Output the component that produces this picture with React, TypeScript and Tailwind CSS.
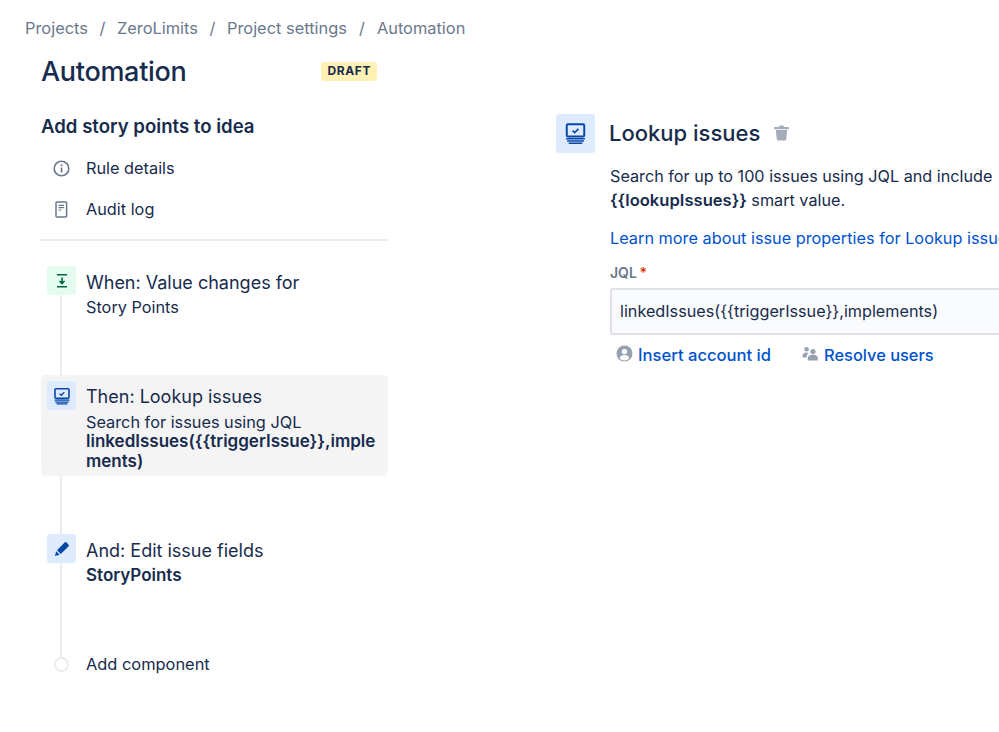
import React from "react";

const LookupIcon = ({ size }: { size: number }) => (
  <svg width={size} height={size} viewBox="0 0 24 24" fill="none">
    <rect x="3.6" y="3.2" width="16.8" height="11.6" rx="1.2" stroke="#0747A6" strokeWidth="1.9" />
    <path d="M9.2 9.2l2 2 3.6-3.6" stroke="#0747A6" strokeWidth="1.6" />
    <path d="M3 17h18M4 19.2h16M5.500 21.300h13" stroke="#0747A6" strokeWidth="1.5" />
  </svg>
);

export default function App() {
  return (
    <div className="relative w-[999px] h-[732px] overflow-hidden bg-white text-[#172B4D] font-['Inter','Noto_Sans',sans-serif]">
      <nav className="flex items-center pl-[25px] pt-[17px] h-[39px] text-[16.4px] leading-[20px] text-[#6B778C] whitespace-nowrap">
        <span>Projects</span>
        <span className="w-[29px] text-center">/</span>
        <span>ZeroLimits</span>
        <span className="w-[29px] text-center">/</span>
        <span>Project settings</span>
        <span className="w-[30px] text-center">/</span>
        <span>Automation</span>
      </nav>

      <div className="flex">
        <aside className="ml-[41px] w-[347px] shrink-0">
          <div className="flex items-center justify-between pr-[11px] h-[40px] mt-[13px]">
            <h1 className="text-[27px] leading-[40px] font-medium tracking-[-0.3px]">Automation</h1>
            <span className="rounded-[3px] bg-[#FFF0B3] px-[6px] h-[19px] mt-[-2px] flex items-center text-[12px] font-bold tracking-[0.6px]">DRAFT</span>
          </div>
          <h2 className="mt-[22px] text-[18.6px] leading-[24px] font-semibold">Add story points to idea</h2>

          <div className="mt-[18px] flex items-center h-[24px]">
            <span className="w-[45px] pl-[11px] flex">
              <svg width="19" height="19" viewBox="0 0 19 19" fill="none">
                <circle cx="9.5" cy="9.5" r="7.3" stroke="#6B778C" strokeWidth="1.6" />
                <rect x="8.7" y="8.5" width="1.7" height="5" fill="#6B778C" />
                <circle cx="9.5" cy="6.2" r="1" fill="#6B778C" />
              </svg>
            </span>
            <span className="text-[16.3px]">Rule details</span>
          </div>
          <div className="mt-[17px] flex items-center h-[24px]">
            <span className="w-[45px] pl-[14px] flex">
              <svg width="13" height="17" viewBox="0 0 13 17" fill="none">
                <rect x="1" y="1" width="10.6" height="15" rx="1" stroke="#6B778C" strokeWidth="1.5" />
                <path d="M3.5 4.4h5.6M3.5 6.7h5.6M3.5 9h2.8" stroke="#6B778C" strokeWidth="1.2" />
              </svg>
            </span>
            <span className="text-[16.3px]">Audit log</span>
          </div>
          <div className="mt-[18px] h-[2px] bg-[#EBECF0]" />

          <div className="relative mt-[25px]">
            <div className="absolute left-[19px] top-[24px] h-[367px] w-[2px] bg-[#EBECF0]" />

            <div className="relative flex h-[109px] pl-[6px]">
              <span className="w-[29px] h-[29px] rounded-[3px] bg-[#E3FCEF] flex items-center justify-center shrink-0">
                <svg width="16" height="16" viewBox="0 0 16 16" fill="none">
                  <path d="M3 1.800h10M3 13.800h10" stroke="#006644" strokeWidth="1.6" />
                  <path d="M8 4.500v6M5.500 8L8 10.600 10.500 8" stroke="#006644" strokeWidth="1.6" />
                </svg>
              </span>
              <div className="ml-[10px] pt-[5px]">
                <div className="text-[18px] leading-[24px]">When: Value changes for</div>
                <div className="text-[16.3px] leading-[24px]">Story Points</div>
              </div>
            </div>

            <div className="relative h-[101px] rounded-[5px] bg-[#F4F4F5] pl-[6px] pt-[6px] flex">
              <span className="w-[29px] h-[29px] rounded-[3px] bg-[#DEEBFF] flex items-center justify-center shrink-0">
                <LookupIcon size={20} />
              </span>
              <div className="ml-[10px] pt-[4px] min-w-0 w-[293px]">
                <div className="text-[18px] leading-[24px]">Then: Lookup issues</div>
                <div className="text-[16.3px] leading-[18px] mt-[4px]">Search for issues using JQL</div>
                <div className="text-[17px] leading-[20px] font-semibold break-all">{"linkedIssues({{triggerIssue}},implements)"}</div>
              </div>
            </div>

            <div className="relative flex h-[173px] pl-[6px] pt-[58px]">
              <span className="w-[29px] h-[29px] rounded-[3px] bg-[#DEEBFF] flex items-center justify-center shrink-0">
                <svg width="18" height="18" viewBox="0 0 18 18">
                  <path d="M11.600 2.600a1.400 1.400 0 0 1 2 0l1.800 1.800a1.400 1.400 0 0 1 0 2L7.800 14 4 10.200z" fill="#0747A6" />
                  <path d="M3.200 11.300l3.500 3.500-4.700 1.200z" fill="#0747A6" />
                </svg>
              </span>
              <div className="ml-[10px] pt-[5px]">
                <div className="text-[18px] leading-[24px]">And: Edit issue fields</div>
                <div className="text-[17px] leading-[24px] font-semibold">StoryPoints</div>
              </div>
            </div>

            <div className="relative flex items-center h-[24px] pl-[13px] mt-[3px]">
              <span className="w-[15px] h-[15px] rounded-full border-2 border-[#EBECF0] bg-white shrink-0" />
              <span className="ml-[10px] pl-[7px] text-[16.4px]">Add component</span>
            </div>
          </div>
        </aside>

        <main className="ml-[168px] w-[600px] shrink-0 pt-[75px]">
          <div className="flex items-center">
            <span className="w-[39px] h-[39px] rounded-[3px] bg-[#DEEBFF] flex items-center justify-center shrink-0">
              <LookupIcon size={25} />
            </span>
            <h3 className="ml-[14px] mt-[-2px] text-[22px] leading-[32px] font-medium">Lookup issues</h3>
            <svg className="ml-[14px] mt-[-1px]" width="15" height="16" viewBox="0 0 15 16">
              <path d="M5.500 0.500h4l.6 1.500H14a.6.6 0 0 1 0 2.200H1a.6.6 0 0 1 0-2.200h3.900z" fill="#A5ADBA" />
              <path d="M1.800 5h11.400l-1 9.600a1.200 1.200 0 0 1-1.200 1H4a1.200 1.200 0 0 1-1.200-1z" fill="#A5ADBA" />
            </svg>
          </div>
          <div className="ml-[54px]">
            <p className="mt-[11px] text-[16.2px] leading-[24px] whitespace-nowrap">Search for up to 100 issues using JQL and include</p>
            <p className="text-[16.2px] leading-[24px]"><b className="font-semibold text-[16.6px]">{"{{lookupIssues}}"}</b> smart value.</p>
            <a className="block mt-[14px] text-[16.3px] leading-[24px] text-[#0052CC] whitespace-nowrap">Learn more about issue properties for Lookup issues</a>
            <div className="mt-[13px] text-[14px] leading-[20px] font-semibold text-[#6B778C]">JQL <span className="text-[#DE350B] ml-[-1px]">*</span></div>
            <div className="mt-[5px] h-[47px] rounded-[3px] border-2 border-[#DFE1E6] bg-[#FAFBFC] pl-[8px] flex items-center text-[16.2px]">{"linkedIssues({{triggerIssue}},implements)"}</div>
            <div className="mt-[10px] flex items-center text-[16.6px] leading-[20px] font-medium text-[#0052CC] whitespace-nowrap">
              <svg className="ml-[6px] mt-[-4px]" width="17" height="17" viewBox="0 0 17 17">
                <circle cx="8.500" cy="8.500" r="8" fill="#97A0AF" />
                <circle cx="8.500" cy="6.600" r="2.700" fill="#fff" />
                <path d="M3.600 13.600c.4-2.600 2.400-3.600 4.900-3.600s4.500 1 4.900 3.600a7 7 0 0 1-9.800 0z" fill="#fff" />
              </svg>
              <span className="ml-[5px]">Insert account id</span>
              <svg className="ml-[31px] mt-[-4px]" width="16" height="15" viewBox="0 0 16 15">
                <circle cx="4.600" cy="3.300" r="2.300" fill="#97A0AF" />
                <circle cx="11" cy="5.600" r="2.600" fill="#97A0AF" />
                <path d="M0.500 10.500c0-2.500 1.600-4 4-4 .9 0 1.500.2 2 .5-1 1-2 2-2 4.500H.5z" fill="#97A0AF" />
                <path d="M5.700 12.500c0-2.600 2-3.800 5.300-3.800s4.800 1.200 4.800 3.800V14.500H5.700z" fill="#97A0AF" />
              </svg>
              <span className="ml-[6px] text-[16.4px]">Resolve users</span>
            </div>
          </div>
        </main>
      </div>
    </div>
  );
}
